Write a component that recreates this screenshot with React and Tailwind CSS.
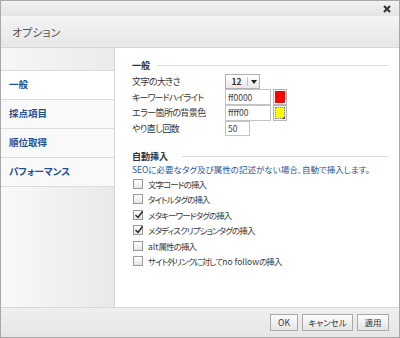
import React from "react";

const font = { fontFamily: '"Noto Sans CJK JP", "Noto Sans", sans-serif', fontFeatureSettings: '"palt"' };

function Check({ checked }) {
  return (
    <span className="relative inline-block w-[10px] h-[10px] border border-[#9a9a9a] bg-gradient-to-b from-[#ffffff] to-[#e6e6e6] shrink-0">
      {checked && (
        <svg className="absolute left-[0px] top-[-1px]" width="10" height="10" viewBox="0 0 10 10">
          <path d="M1.5 5 L4 7.5 L8.5 1.5" fill="none" stroke="#222" strokeWidth="1.4" />
        </svg>
      )}
    </span>
  );
}

function Section({ title, lineMl }) {
  return (
    <div className="flex items-center h-[12px]">
      <span className="text-[9px] font-bold text-[#333] leading-none">{title}</span>
      <div className={`flex-1 border-t border-[#dcdcdc] ${lineMl}`} />
    </div>
  );
}

function Swatch({ color, dotted }) {
  return (
    <span className="relative ml-[2px] w-[14px] h-[16px] border border-[#b5b5b5] bg-[#f2f2f2] p-[1px] flex">
      <span
        className={`flex-1 ${dotted ? "border border-dotted border-[#888]" : ""}`}
        style={{ background: color }}
      />
      <span className="absolute right-[1px] bottom-[1px] w-0 h-0 border-l-[3px] border-l-transparent border-b-[3px] border-b-[#555]" />
    </span>
  );
}

export default function App() {
  const items = [
    [<>文字コードの挿入</>, false, "a"],
    [<>タイトルタグの挿入</>, false, "b"],
    [<>メタキーワードタグの挿入</>, true, "c"],
    [<>メタディスクリプションタグの挿入</>, true, "d"],
    [<><span className="tracking-normal">alt</span>属性の挿入</>, false, "e"],
    [<>サイト外リンクに対して<span className="tracking-normal">no follow</span>の挿入</>, false, "f"],
  ];
  return (
    <div style={font} className="w-[400px] h-[338px] border border-[#a8a8a8] flex flex-col bg-white overflow-hidden">
      {/* title bar */}
      <div className="h-[16px] bg-gradient-to-b from-[#f2f2f2] to-[#e4e4e4] border-b border-[#f8f8f8] flex items-center justify-end pr-[8px]">
        <svg width="8" height="8" viewBox="0 0 8 8">
          <path d="M1 1 L7 7 M7 1 L1 7" stroke="#333" strokeWidth="2" />
        </svg>
      </div>
      {/* header */}
      <div className="h-[31px] bg-gradient-to-b from-[#f3f3f3] to-[#e7e7e7] border-b border-[#d6d6d6] flex items-center pl-[11px]">
        <span className="text-[11px] text-[#555]">オプション</span>
      </div>
      {/* main */}
      <div className="flex-1 flex min-h-0">
        <div className="w-[114px] shrink-0 border-r border-[#d8d8d8] flex flex-col bg-gradient-to-r from-[#f9f9f9] to-[#e9e9e9]">
          <div className="h-[23px] bg-gradient-to-r from-[#f6f6f6] to-[#ebebeb] border-b border-[#dcdcdc]" />
          {["一般", "採点項目", "順位取得", "パフォーマンス"].map((t, i) => (
            <div
              key={t}
              className={`h-[29px] border-b border-[#dcdcdc] flex items-center pl-[8px] ${i === 0 ? "bg-white" : "bg-[#f9f9f9]"}`}
            >
              <span className="text-[9.5px] font-bold text-[#1f4f8f] leading-none">{t}</span>
            </div>
          ))}
          <div className="flex-1" />
        </div>
        <div className="flex-1 min-w-0 pl-[17px] pr-[11px] pt-[11px] flex flex-col">
          <Section title="一般" lineMl="ml-[7px]" />
          <div className="mt-[3px] flex flex-col text-[9px] text-[#333]">
            <div className="flex items-center h-[15px]">
              <span className="w-[93px] leading-none tracking-[-0.6px]">文字の大きさ</span>
              <span className="w-[35px] h-[15px] border border-[#b0b0b0] bg-gradient-to-b from-[#ffffff] to-[#e8e8e8] flex items-center">
                <span className="flex-1 text-center text-[8.5px] font-bold leading-none">12</span>
                <span className="h-[9px] border-l border-[#c4c4c4]" />
                <span className="w-[11px] flex justify-center">
                  <span className="w-0 h-0 border-l-[3px] border-r-[3px] border-t-[4px] border-l-transparent border-r-transparent border-t-[#222]" />
                </span>
              </span>
            </div>
            <div className="flex items-center h-[16px]">
              <span className="w-[93px] leading-none tracking-[-0.9px]">キーワードハイライト</span>
              <span className="w-[46px] h-[16px] border border-[#c4c4c4] bg-white flex items-center pl-[2px] text-[8.5px] leading-none text-[#444]">ff0000</span>
              <Swatch color="#ff0000" />
            </div>
            <div className="flex items-center h-[15px]">
              <span className="w-[93px] leading-none tracking-[-0.6px]">エラー箇所の背景色</span>
              <span className="w-[46px] h-[16px] border border-[#c4c4c4] bg-white flex items-center pl-[2px] text-[8.5px] leading-none text-[#444]">ffff00</span>
              <Swatch color="#ffff00" dotted />
            </div>
            <div className="flex items-center h-[16px]">
              <span className="w-[93px] leading-none tracking-[-0.6px]">やり直し回数</span>
              <span className="w-[25px] h-[15px] border border-[#c4c4c4] bg-white flex items-center pl-[2px] text-[8.5px] leading-none text-[#444]">50</span>
            </div>
          </div>
          <div className="mt-[14px]">
            <Section title="自動挿入" lineMl="ml-[14px]" />
          </div>
          <div className="h-[14px] flex items-center text-[8.5px] text-[#2b5797] leading-none whitespace-nowrap">
            SEOに必要なタグ及び属性の記述がない場合、自動で挿入します。
          </div>
          <div className="flex flex-col">
            {items.map(([t, c, k]) => (
              <div key={k} className="h-[15.5px] flex items-center gap-[5px] pl-[1px]">
                <Check checked={c} />
                <span className="text-[8.5px] text-[#3a3a3a] leading-none whitespace-nowrap tracking-[-0.9px]">{t}</span>
              </div>
            ))}
          </div>
        </div>
      </div>
      {/* footer */}
      <div className="h-[30px] border-t border-[#d8d8d8] bg-gradient-to-b from-[#efefef] to-[#e6e6e6] flex items-center justify-end gap-[4px] pr-[10px]">
        {[["OK", "w-[28px]"], ["キャンセル", "w-[51px]"], ["適用", "w-[32px]"]].map(([t, w]) => (
          <button
            key={t}
            className={`${w} h-[17px] border border-[#a9a9a9] bg-gradient-to-b from-[#fdfdfd] to-[#e4e4e4] text-[8.5px] text-[#333] leading-none flex items-center justify-center`}
          >
            {t}
          </button>
        ))}
      </div>
    </div>
  );
}
